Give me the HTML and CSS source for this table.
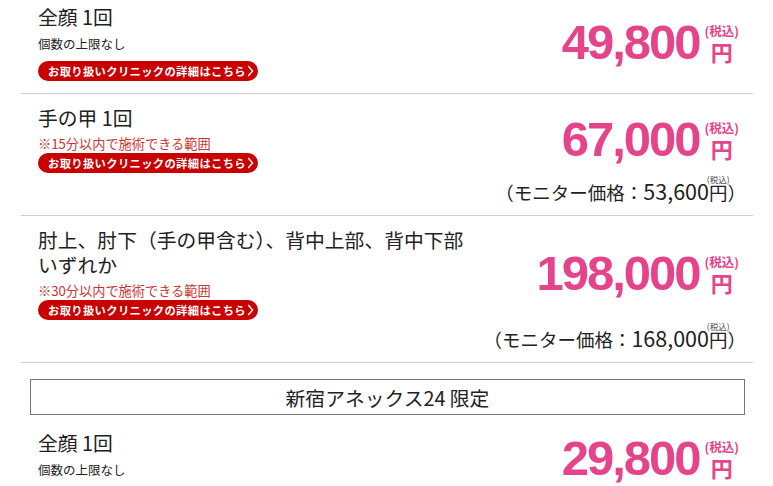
FILE: index.html
```html
<!DOCTYPE html>
<html lang="ja">
<head>
<meta charset="utf-8">
<title>料金</title>
<link rel="stylesheet" href="styles.css">
</head>
<body>
<div class="plans">
  <section class="plan">
    <div class="plan-main">
      <div class="plan-info">
        <h3 class="plan-title">全顔 1回</h3>
        <p class="plan-sub">個数の上限なし</p>
        <a class="clinic-btn" href="#">お取り扱いクリニックの詳細はこちら<svg class="chev" width="7" height="12" viewBox="0 0 7 12"><path d="M1.2 1 L5.6 6 L1.2 11" fill="none" stroke="#fff" stroke-width="1.4"/></svg></a>
      </div>
      <div class="price"><span class="price-num">49,800</span><span class="price-unit"><span class="price-tax">(税込)</span><span class="price-yen">円</span></span></div>
    </div>
  </section>

  <section class="plan">
    <div class="plan-main">
      <div class="plan-info">
        <h3 class="plan-title">手の甲 1回</h3>
        <p class="plan-note">※15分以内で施術できる範囲</p>
        <a class="clinic-btn" href="#">お取り扱いクリニックの詳細はこちら<svg class="chev" width="7" height="12" viewBox="0 0 7 12"><path d="M1.2 1 L5.6 6 L1.2 11" fill="none" stroke="#fff" stroke-width="1.4"/></svg></a>
      </div>
      <div class="price"><span class="price-num">67,000</span><span class="price-unit"><span class="price-tax">(税込)</span><span class="price-yen">円</span></span></div>
    </div>
    <p class="monitor">（モニター価格：<span class="monitor-num">53,600</span><span class="monitor-yen">円<span class="monitor-tax">(税込)</span></span>）</p>
  </section>

  <section class="plan">
    <div class="plan-main">
      <div class="plan-info">
        <h3 class="plan-title">肘上、肘下（手の甲含む）、背中上部、背中下部<br>いずれか</h3>
        <p class="plan-note">※30分以内で施術できる範囲</p>
        <a class="clinic-btn" href="#">お取り扱いクリニックの詳細はこちら<svg class="chev" width="7" height="12" viewBox="0 0 7 12"><path d="M1.2 1 L5.6 6 L1.2 11" fill="none" stroke="#fff" stroke-width="1.4"/></svg></a>
      </div>
      <div class="price"><span class="price-num">198,000</span><span class="price-unit"><span class="price-tax">(税込)</span><span class="price-yen">円</span></span></div>
    </div>
    <p class="monitor">（モニター価格：<span class="monitor-num">168,000</span><span class="monitor-yen">円<span class="monitor-tax">(税込)</span></span>）</p>
  </section>

  <div class="limited">新宿アネックス24 限定</div>

  <section class="plan plan-last">
    <div class="plan-main">
      <div class="plan-info">
        <h3 class="plan-title">全顔 1回</h3>
        <p class="plan-sub">個数の上限なし</p>
      </div>
      <div class="price"><span class="price-num">29,800</span><span class="price-unit"><span class="price-tax">(税込)</span><span class="price-yen">円</span></span></div>
    </div>
  </section>
</div>
</body>
</html>
```
FILE: styles.css
```css
body {
  margin: 0;
  background: #fff;
  color: #222;
  font-family: "Noto Sans CJK JP", "Noto Sans", sans-serif;
}

.plans {
  width: 732px;
  margin: -7px 0 0 21px;
}

.plan {
  padding: 11px 15px 12px 17px;
  border-bottom: 1px solid #cfcfcf;
}

.plan-main {
  display: flex;
  align-items: center;
  justify-content: space-between;
}

.plan-info {
  display: flex;
  flex-direction: column;
  align-items: flex-start;
}

.plan-title {
  margin: 0;
  font-size: 19.8px;
  font-weight: 400;
  line-height: 25px;
}

.plan-sub {
  margin: 7px 0 9px;
  font-size: 12.5px;
  line-height: 16px;
}

.plan-note {
  margin: 6px 0 1px;
  color: #cc3333;
  font-size: 13.2px;
  line-height: 16px;
}

.clinic-btn {
  display: inline-flex;
  align-items: center;
  gap: 1px;
  height: 20px;
  padding: 0 4px 0 10px;
  border-radius: 10px;
  background: #c80000;
  color: #fff;
  font-size: 11.3px;
  font-weight: 700;
  letter-spacing: 0.35px;
  text-decoration: none;
}

.chev {
  display: block;
}

.price {
  display: flex;
  align-items: flex-end;
  margin-right: -1px;
  color: #e6448a;
  font-weight: 700;
}

.price-num {
  font-family: "Liberation Sans", Arial, sans-serif;
  font-size: 49px;
  line-height: 49px;
  letter-spacing: -2px;
}

.price-unit {
  display: flex;
  flex-direction: column;
  align-items: center;
  margin: 0 0 5px 5px;
  font-family: "Noto Sans CJK JP", sans-serif;
}

.price-tax {
  font-size: 12.5px;
  line-height: 12px;
  margin-bottom: 3px;
}

.price-yen {
  font-size: 22px;
  line-height: 22px;
}

.monitor {
  margin: 7px -8px 0 0;
  text-align: right;
  font-size: 18.5px;
  line-height: 22px;
}

.monitor-num {
  font-size: 21.5px;
  font-weight: 400;
}

.monitor-yen {
  position: relative;
}

.monitor-tax {
  position: absolute;
  top: -4px;
  left: 50%;
  transform: translateX(-50%);
  font-size: 8.5px;
  line-height: 1;
  white-space: nowrap;
  color: #444;
}

.limited {
  display: flex;
  align-items: center;
  justify-content: center;
  height: 34px;
  margin: 16px 8px 0 9px;
  border: 1px solid #777;
  font-size: 19.8px;
}

.plan-last {
  border-bottom: none;
  padding-top: 15px;
}
```
